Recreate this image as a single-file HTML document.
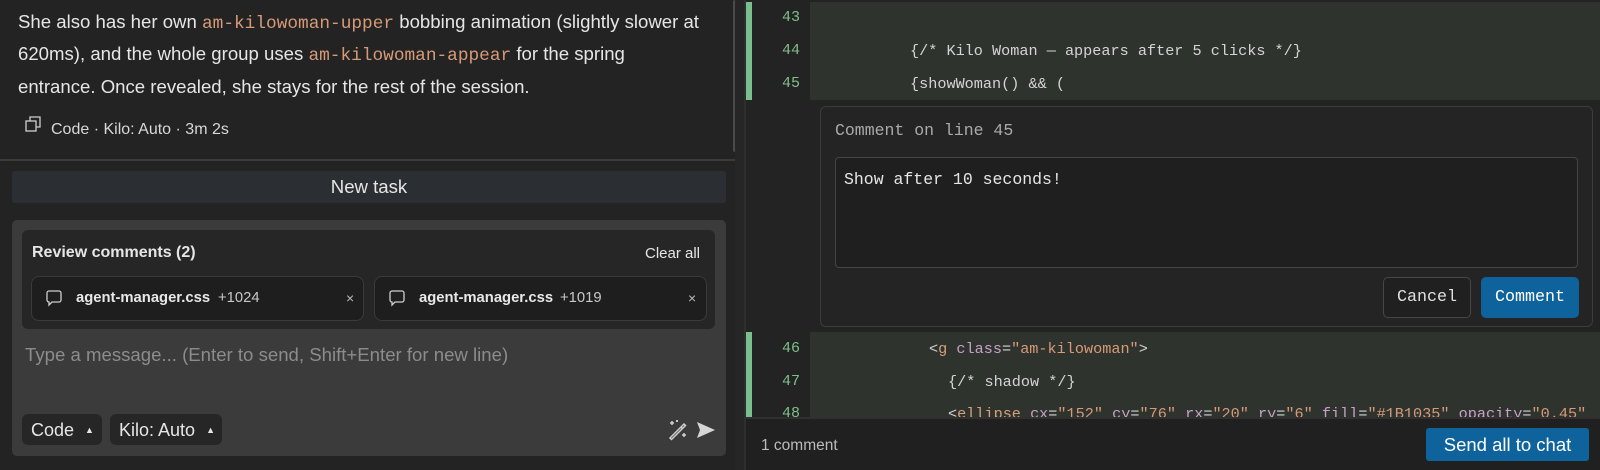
<!DOCTYPE html>
<html><head><meta charset="utf-8"><style>
*{margin:0;padding:0;box-sizing:border-box}
body{width:1600px;height:470px;background:#202020;font-family:"Liberation Sans",sans-serif;position:relative;overflow:hidden;color:#e0e0e0}
.abs{position:absolute}
.mono{font-family:"Liberation Mono","DejaVu Sans Mono",monospace}
.p{left:18px;font-size:18.6px;color:#e6e6e6;white-space:nowrap;line-height:22px}
.c{color:#d79a78;font-family:"Liberation Mono",monospace;font-size:17.8px}
.chip{top:276px;height:45px;background:#1e1e1e;border:1px solid #3a3a3a;border-radius:8px;font-size:14.8px}
.chip b{position:absolute;top:13px;color:#e8e8e8}
.chip span.n{position:absolute;top:13px;color:#c8c8c8}
.chip .x{position:absolute;top:13px;color:#bbb;font-size:14px}
.ln{left:745px;width:55px;text-align:right;color:#7fbf8a;font-size:15px}
.code{font-size:15.2px;color:#d4d4d4;white-space:pre}
.btnsm{top:414px;height:31px;background:#262626;border-radius:6px;font-size:18px;color:#e6e6e6;padding:6px 0 0 9px}
.a{color:#c8a0c8}.s{color:#d79a78}
</style></head><body>
<!-- left -->
<div class="abs" style="left:0;top:0;width:735px;height:470px;background:#232323"></div>
<div class="abs" style="left:733px;top:0;width:4px;height:152px;background:#4a4a4a;border-radius:2px"></div>
<div class="abs p" style="top:11px">She also has her own <span class="c">am-kilowoman-upper</span> bobbing animation (slightly slower at</div>
<div class="abs p" style="top:43px">620ms), and the whole group uses <span class="c">am-kilowoman-appear</span> for the spring</div>
<div class="abs p" style="top:76px">entrance. Once revealed, she stays for the rest of the session.</div>
<svg class="abs" style="left:25px;top:116px" width="18" height="18" viewBox="0 0 18 18" fill="none" stroke="#cfcfcf" stroke-width="1.3"><rect x="1" y="5" width="10" height="10"/><path d="M5 5V1h10v10h-4"/></svg>
<div class="abs" style="left:51px;top:121px;font-size:16px;color:#d8d8d8">Code · Kilo: Auto · 3m 2s</div>
<div class="abs" style="left:0;top:159px;width:735px;height:2px;background:#3a3a3a"></div>
<div class="abs" style="left:12px;top:171px;width:714px;height:32px;background:#2b2e32;border-radius:3px;text-align:center;font-size:18.6px;line-height:32px;color:#e6e6e6">New task</div>
<div class="abs" style="left:12px;top:220px;width:714px;height:236px;background:#3b3b3b;border-radius:5px"></div>
<div class="abs" style="left:22px;top:230px;width:693px;height:99px;background:#262626;border-radius:6px"></div>
<div class="abs" style="left:32px;top:244px;font-size:16px;font-weight:bold;color:#e6e6e6">Review comments (2)</div>
<div class="abs" style="left:645px;top:245px;font-size:15px;color:#e6e6e6">Clear all</div>
<div class="abs chip" style="left:31px;width:333px"><svg class="abs" style="left:14px;top:13px" width="16" height="17" viewBox="0 0 16 17" fill="none" stroke="#cfcfcf" stroke-width="1.3"><path d="M3 1h10a2 2 0 0 1 2 2v7a2 2 0 0 1-2 2H6l-3 3v-3a2 2 0 0 1-2-2V3a2 2 0 0 1 2-2z"/></svg><b style="left:44px">agent-manager.css</b><span class="n" style="left:186px">+1024</span><span class="x" style="left:314px">×</span></div>
<div class="abs chip" style="left:374px;width:333px"><svg class="abs" style="left:14px;top:13px" width="16" height="17" viewBox="0 0 16 17" fill="none" stroke="#cfcfcf" stroke-width="1.3"><path d="M3 1h10a2 2 0 0 1 2 2v7a2 2 0 0 1-2 2H6l-3 3v-3a2 2 0 0 1-2-2V3a2 2 0 0 1 2-2z"/></svg><b style="left:44px">agent-manager.css</b><span class="n" style="left:185px">+1019</span><span class="x" style="left:313px">×</span></div>
<div class="abs" style="left:25px;top:344px;font-size:18.6px;color:#8c8c8c">Type a message... (Enter to send, Shift+Enter for new line)</div>
<div class="abs btnsm" style="left:22px;width:80px">Code <span style="font-size:9px;margin-left:6px;vertical-align:3px">▲</span></div>
<div class="abs btnsm" style="left:110px;width:112px">Kilo: Auto <span style="font-size:9px;margin-left:6px;vertical-align:3px">▲</span></div>
<svg class="abs" style="left:667px;top:419px" width="22" height="22" viewBox="0 0 22 22" fill="none" stroke="#d0d0d0" stroke-width="1.5"><path d="M3 19L17 5l1.5 1.5L4.5 20.5z"/><path d="M14 8l1.5 1.5"/><path d="M5 2v4M3 4h4M17 14v4M15 16h4M10 1v2M9 2h2"/></svg>
<svg class="abs" style="left:696px;top:421px" width="20" height="18" viewBox="0 0 20 18"><path d="M1 1l18 8-18 8 3-8z" fill="#d6d6d6"/></svg>
<!-- divider -->
<div class="abs" style="left:735px;top:0;width:10px;height:470px;background:#262626"></div>
<div class="abs" style="left:744px;top:0;width:2px;height:470px;background:#2e2e2e"></div>
<!-- right -->
<div class="abs" style="left:746px;top:0;width:854px;height:417px;background:#232323"></div>
<div class="abs" style="left:746px;top:2px;width:6px;height:98px;background:#79c08d"></div>
<div class="abs" style="left:746px;top:332px;width:6px;height:85px;background:#79c08d"></div>
<div class="abs" style="left:810px;top:2px;width:790px;height:98px;background:#2e332e"></div>
<div class="abs" style="left:810px;top:332px;width:790px;height:85px;background:#2e332e"></div>
<div class="abs mono ln" style="top:9px">43</div>
<div class="abs mono ln" style="top:42px">44</div>
<div class="abs mono ln" style="top:75px">45</div>
<div class="abs mono code" style="left:910px;top:42px">{/* Kilo Woman — appears after 5 clicks */}</div>
<div class="abs mono code" style="left:910px;top:75px">{showWoman() &amp;&amp; (</div>
<div class="abs" style="left:820px;top:106px;width:773px;height:221px;border:1px solid #3c3c3c;border-radius:6px;background:#242424"></div>
<div class="abs mono" style="left:835px;top:121px;font-size:16.5px;color:#aaa">Comment on line 45</div>
<div class="abs" style="left:835px;top:157px;width:743px;height:111px;background:#1f1f1f;border:1px solid #454545;border-radius:4px"></div>
<div class="abs mono" style="left:844px;top:170px;font-size:16.5px;color:#e6e6e6">Show after 10 seconds!</div>
<div class="abs mono" style="left:1383px;top:277px;width:88px;height:41px;border:1px solid #474747;border-radius:5px;background:#202020;text-align:center;line-height:39px;font-size:16.7px;color:#e0e0e0">Cancel</div>
<div class="abs mono" style="left:1481px;top:277px;width:98px;height:41px;border-radius:5px;background:#0e639c;text-align:center;line-height:41px;font-size:16.7px;color:#fff">Comment</div>
<div class="abs mono ln" style="top:340px">46</div>
<div class="abs mono ln" style="top:373px">47</div>
<div class="abs mono ln" style="top:405px">48</div>
<div class="abs mono code" style="left:929px;top:340px">&lt;<span style="color:#d7a07a">g</span> <span class="a">class</span>=<span class="s">"am-kilowoman"</span>&gt;</div>
<div class="abs mono code" style="left:948px;top:373px">{/* shadow */}</div>
<div class="abs mono code" style="left:948px;top:405px">&lt;<span style="color:#d7a07a">ellipse</span> <span class="a">cx</span>=<span class="s">"152"</span> <span class="a">cy</span>=<span class="s">"76"</span> <span class="a">rx</span>=<span class="s">"20"</span> <span class="a">ry</span>=<span class="s">"6"</span> <span class="a">fill</span>=<span class="s">"#1B1035"</span> <span class="a">opacity</span>=<span class="s">"0.45"</span></div>
<!-- footer -->
<div class="abs" style="left:746px;top:417px;width:854px;height:53px;background:#202020;border-top:2px solid #303030"></div>
<div class="abs" style="left:761px;top:437px;font-size:15.5px;color:#bbb">1 comment</div>
<div class="abs" style="left:1426px;top:428px;width:163px;height:33px;background:#0e639c;border-radius:3px;text-align:center;line-height:33px;font-size:18.5px;color:#fff">Send all to chat</div>
</body></html>
